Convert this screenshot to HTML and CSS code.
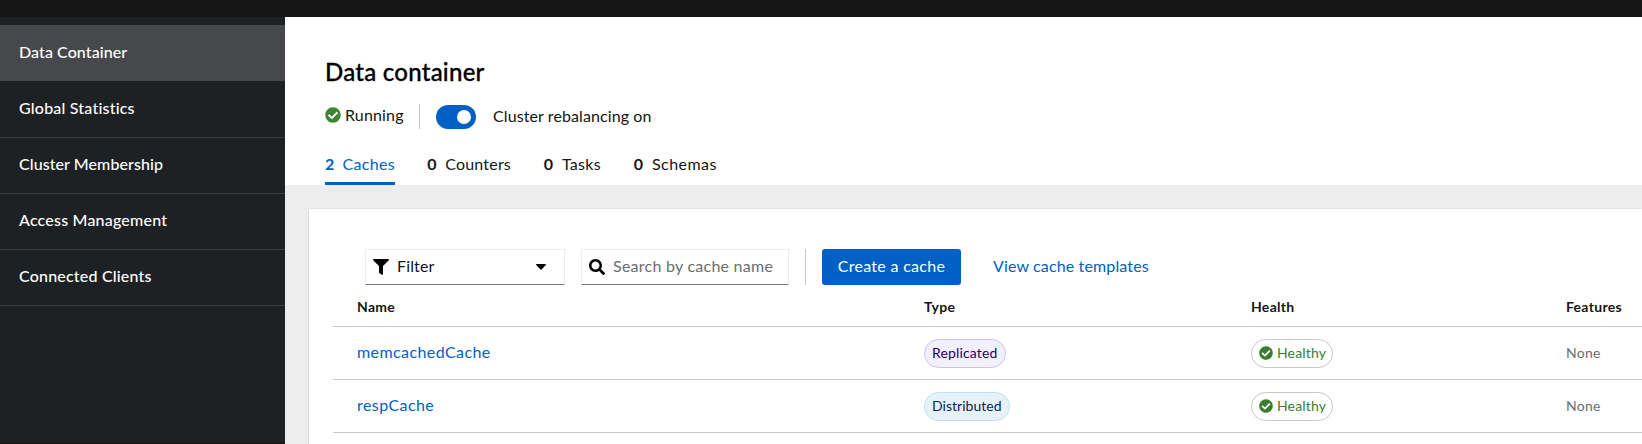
FILE: index.html
```html
<!DOCTYPE html>
<html lang="en">
<head>
<meta charset="utf-8">
<title>Data container</title>
<link rel="stylesheet" href="styles.css">
</head>
<body>
<svg width="0" height="0" class="sprite" aria-hidden="true">
  <symbol id="check" viewBox="0 0 512 512"><path d="M504 256c0 136.967-111.033 248-248 248S8 392.967 8 256 119.033 8 256 8s248 111.033 248 248zM227.314 387.314l184-184c6.248-6.248 6.248-16.379 0-22.627l-22.627-22.627c-6.248-6.249-16.379-6.249-22.628 0L216 308.118l-70.059-70.059c-6.248-6.248-16.379-6.248-22.628 0l-22.627 22.627c-6.248 6.248-6.248 16.379 0 22.627l104 104c6.249 6.249 16.379 6.249 22.628.001z"/></symbol>
</svg>
<div class="page">
  <header class="masthead"></header>
  <nav class="sidebar">
    <a class="nav-link current">Data Container</a>
    <a class="nav-link wide">Global Statistics</a>
    <a class="nav-link">Cluster Membership</a>
    <a class="nav-link wide">Access Management</a>
    <a class="nav-link wide">Connected Clients</a>
  </nav>
  <main class="main">
    <section class="heading">
      <h1 class="title">Data container</h1>
      <div class="status">
        <svg class="icon-running"><use href="#check"/></svg>
        <span class="running">Running</span>
        <span class="divider"></span>
        <span class="switch"><span class="knob"></span></span>
        <span class="switch-label">Cluster rebalancing on</span>
      </div>
      <div class="tabs">
        <a class="tab active"><b class="count">2</b><span>Caches</span></a>
        <a class="tab counters"><b class="count zero">0</b><span>Counters</span></a>
        <a class="tab tasks"><b class="count zero">0</b><span>Tasks</span></a>
        <a class="tab schemas"><b class="count zero">0</b><span>Schemas</span></a>
      </div>
    </section>
    <section class="content">
      <div class="card">
        <div class="toolbar">
          <div class="field filter">
            <svg class="icon-filter" viewBox="0 0 512 512"><path d="M487.976 0H24.028C2.71 0-8.047 25.866 7.058 40.971L192 225.941V432c0 7.831 3.821 15.17 10.237 19.662l80 55.98C298.02 518.69 320 507.493 320 487.98V225.941l184.947-184.97C520.021 25.896 509.338 0 487.976 0z"/></svg>
            <span class="filter-text">Filter</span>
            <svg class="caret" viewBox="0 0 10 6"><path d="M.6 0h8.800c.5 0 .8.6.4 1L5.500 5.400a.7.7 0 0 1-1 0L.2 1C-.2.6.1 0 .6 0z"/></svg>
          </div>
          <div class="field search">
            <svg class="icon-search" viewBox="0 0 512 512"><path d="M505 442.7L405.3 343c-4.500-4.500-10.600-7-17-7H372c27.600-35.300 44-79.700 44-128C416 93.100 322.900 0 208 0S0 93.100 0 208s93.100 208 208 208c48.300 0 92.700-16.400 128-44v16.300c0 6.400 2.500 12.500 7 17l99.700 99.700c9.400 9.400 24.600 9.400 33.900 0l28.300-28.300c9.400-9.400 9.400-24.600.1-34zM208 336c-70.700 0-128-57.200-128-128 0-70.700 57.200-128 128-128 70.700 0 128 57.200 128 128 0 70.700-57.200 128-128 128z"/></svg>
            <span class="placeholder">Search by cache name</span>
          </div>
          <span class="tool-divider"></span>
          <button class="create">Create a cache</button>
          <a class="templates">View cache templates</a>
        </div>
        <div class="table">
          <div class="row head"><span>Name</span><span>Type</span><span>Health</span><span>Features</span></div>
          <div class="row">
            <a class="cache">memcachedCache</a>
            <span><span class="label purple">Replicated</span></span>
            <span><span class="label healthy"><svg class="icon-health"><use href="#check"/></svg>Healthy</span></span>
            <span class="none">None</span>
          </div>
          <div class="row">
            <a class="cache">respCache</a>
            <span><span class="label blue">Distributed</span></span>
            <span><span class="label healthy"><svg class="icon-health"><use href="#check"/></svg>Healthy</span></span>
            <span class="none">None</span>
          </div>
        </div>
      </div>
    </section>
  </main>
</div>
</body>
</html>
```
FILE: styles.css
```css
* { box-sizing: border-box; }
body {
  margin: 0;
  font: 16px/24px Lato, "Open Sans", sans-serif;
  letter-spacing: 0.3px;
  color: #151515;
  overflow: hidden;
}
.sprite { position: absolute; }
svg { display: block; flex: none; }
.page {
  display: grid;
  grid-template: 17px 427px / 285px 1fr;
  height: 444px;
}
.masthead { grid-column: 1 / 3; background: #151515; }
.sidebar {
  padding-top: 8px;
  background: #1e2124;
  border-bottom: 1px solid #151515;
}
.nav-link {
  display: flex;
  align-items: center;
  height: 56px;
  padding: 0 0 3px 19px;
  border-bottom: 1px solid #3a3d41;
  color: #fff;
  font-weight: 500;
  letter-spacing: 0.08px;
}
.nav-link.wide { letter-spacing: 0.2px; }
.nav-link.current {
  margin-bottom: 1px;
  padding-bottom: 1px;
  border-color: #47484b;
  background: #47484b;
}
.main { display: flex; flex-direction: column; overflow: hidden; }
.heading {
  height: 168px;
  flex: none;
  padding: 39px 0 0 40px;
  background: #fff;
}
.title {
  margin: 0;
  font-size: 24px;
  line-height: 31px;
  font-weight: 500;
  letter-spacing: 0.25px;
  color: #000;
  -webkit-text-stroke: 0.3px #000;
}
.status { display: flex; align-items: center; height: 25px; margin-top: 17px; }
.icon-running { width: 16px; height: 16px; margin-bottom: 3px; fill: #3e8635; }
.running { width: 74px; padding: 0 0 3px 4px; letter-spacing: 0.15px; }
.divider { width: 1px; height: 25px; margin-left: 4px; background: #c7c7c7; }
.switch {
  display: flex;
  align-items: center;
  justify-content: flex-end;
  width: 40px;
  height: 24px;
  margin: 1px 0 0 16px;
  padding-right: 5px;
  border-radius: 12px;
  background: #0060c5;
}
.knob { width: 14px; height: 14px; border-radius: 50%; background: #fff; }
.switch-label { margin-left: 17px; padding-bottom: 2px; letter-spacing: 0.1px; }
.tabs { display: flex; gap: 32px; margin-top: 16px; }
.tab { display: flex; gap: 8px; height: 40px; padding-top: 7px; }
.tab.active { width: 70px; color: #0060c5; border-bottom: 3px solid #0060c5; }
.counters { width: 84px; letter-spacing: 0.2px; }
.tasks { width: 58px; }
.schemas { letter-spacing: 0.45px; }
.zero { width: 11px; text-align: center; }
.content { flex: 1; padding: 24px 0 0 24px; background: #ededed; }
.card {
  height: 240px;
  padding: 40px 0 0 24px;
  background: #fff;
  box-shadow: 0 1px 2px rgba(3, 3, 3, .12), 0 0 2px rgba(3, 3, 3, .1);
}
.toolbar { display: flex; height: 36px; padding-left: 32px; }
.field {
  display: flex;
  align-items: center;
  border: 1px solid #ededed;
  border-bottom-color: #78797c;
  padding: 0 7px 1px;
}
.filter { width: 200px; }
.icon-filter { width: 16px; height: 16px; }
.filter-text { flex: 1; margin-left: 8px; padding-bottom: 2px; letter-spacing: 0.15px; }
.caret { width: 10px; height: 6px; margin-right: 11px; }
.search { width: 208px; margin-left: 16px; }
.icon-search { width: 16px; height: 16px; }
.placeholder {
  margin-left: 8px;
  padding-bottom: 2px;
  color: #6a6e73;
  letter-spacing: 0.25px;
  white-space: nowrap;
}
.tool-divider { width: 1px; margin-left: 16px; background: #c7c7c7; }
.create {
  width: 139px;
  margin: 0 32px 0 16px;
  padding: 0 0 2px;
  border: 0;
  border-radius: 3px;
  background: #0060c5;
  color: #fff;
  font: inherit;
  letter-spacing: inherit;
}
.templates { line-height: 34px; color: #0060c5; letter-spacing: 0.14px; }
.row {
  display: grid;
  grid-template-columns: 567px 327px 315px 1fr;
  align-items: center;
  height: 53px;
  padding-left: 24px;
  border-bottom: 1px solid #c7c7c7;
}
.row.head { height: 42px; padding-top: 3px; font-size: 14px; font-weight: 700; }
.cache { padding-bottom: 2px; color: #0060c5; letter-spacing: 0.42px; }
.label {
  display: inline-flex;
  align-items: center;
  height: 29px;
  padding: 0 7px;
  border: 1px solid #c7c7c7;
  border-radius: 15px;
  font-size: 14px;
  letter-spacing: 0.15px;
  vertical-align: middle;
}
.purple { width: 82px; background: #f2f0fc; border-color: #cbc1ff; color: #1f0066; }
.blue { width: 86px; background: #e7f1fa; border-color: #bee1f4; color: #002952; letter-spacing: 0.03px; }
.healthy { width: 82px; color: #3a7d30; }
.icon-health { width: 14px; height: 14px; margin-right: 4px; fill: #3a7d30; }
.none { font-size: 14px; color: #6a6e73; }
```
